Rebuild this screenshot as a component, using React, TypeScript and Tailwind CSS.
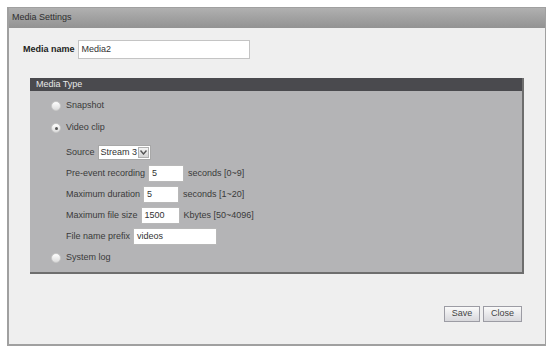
import React from 'react';

const font = { fontFamily: '"Liberation Sans", Arial, sans-serif' };

function Radio({ checked, label }: { checked?: boolean; label: string }) {
  return (
    <div className="flex h-[22px] items-center pl-[21px]">
      <span className="flex h-[10px] w-[10px] items-center justify-center rounded-full border border-[#c8c8c8] bg-gradient-to-b from-[#ffffff] to-[#dcdcdc]">
        {checked && <span className="h-[3px] w-[3px] rounded-full bg-[#555]" />}
      </span>
      <span className="ml-[5px] text-[9px] text-[#3a3a3a]">{label}</span>
    </div>
  );
}

function Field({ label, width, value, hint }: { label: string; width: string; value: string; hint?: string }) {
  return (
    <div className="flex h-[21px] items-center">
      <span className="text-[9px] text-[#3a3a3a]">{label}</span>
      <div className={`ml-[3px] flex h-[17px] items-center border border-[#b8b8b8] bg-white pl-[3px] text-[9px] text-[#333] ${width}`}>
        {value}
      </div>
      {hint && <span className="ml-[4px] text-[9px] text-[#3a3a3a]">{hint}</span>}
    </div>
  );
}

function Btn({ children, w }: { children: React.ReactNode; w: string }) {
  return (
    <button className={`flex h-[16px] items-center justify-center border border-[#9c9ca4] bg-gradient-to-b from-[#fafafa] to-[#d8d8dc] text-[9px] text-[#444] ${w}`}>
      {children}
    </button>
  );
}

export default function App() {
  return (
    <div className="h-[348px] w-[549px] bg-white pl-[7px] pt-[7px]" style={font}>
      <div className="flex h-[339px] w-[539px] flex-col border border-[#a0a0a0] border-b-2 border-l-2 bg-[#efefef]">
        <div className="flex h-[20px] items-center bg-gradient-to-b from-[#b0b0b0] to-[#929292] pl-[3px] text-[9px] text-[#2e2e2e]">
          Media Settings
        </div>

        <div className="mt-[12px] flex items-center pl-[14px]">
          <span className="text-[9px] font-bold text-[#222]">Media name</span>
          <div className="ml-[3px] flex h-[19px] w-[172px] items-center border border-[#c4c4c4] bg-white pl-[3px] text-[9px] text-[#333]">
            Media2
          </div>
        </div>

        <div className="ml-[21px] mt-[19px] w-[494px] border-b-2 border-r-2 border-[#6e6e6e] bg-[#b4b4b6]">
          <div className="flex h-[13px] items-center bg-[#4a4a4e] pl-[6px] text-[9px] text-[#e8e8e8]">Media Type</div>
          <div className="pb-[3px] pt-[4px]">
            <Radio label="Snapshot" />
            <Radio checked label="Video clip" />
            <div className="pl-[36px] pt-[3px]">
              <div className="flex h-[21px] items-center">
                <span className="text-[9px] text-[#3a3a3a]">Source</span>
                <div className="ml-[3px] flex h-[15px] w-[53px] items-center border border-[#a8a8a8] bg-white pl-[2px] text-[9px] text-[#333]">
                  <span className="flex-1">Stream 3</span>
                  <span className="mr-[1px] flex h-[11px] w-[11px] items-center justify-center border border-[#b0b0b0] bg-gradient-to-b from-[#f4f4f4] to-[#d4d4d4]">
                    <svg width="7" height="5" viewBox="0 0 7 5"><path d="M0.5 0.5 L3.5 4 L6.5 0.5" fill="none" stroke="#555" strokeWidth="1.4" /></svg>
                  </span>
                </div>
              </div>
              <Field label="Pre-event recording" width="w-[36px]" value="5" hint="seconds [0~9]" />
              <Field label="Maximum duration" width="w-[36px]" value="5" hint="seconds [1~20]" />
              <Field label="Maximum file size" width="w-[39px]" value="1500" hint="Kbytes [50~4096]" />
              <Field label="File name prefix" width="w-[84px]" value="videos" />
            </div>
            <Radio label="System log" />
          </div>
        </div>

        <div className="flex-1" />
        <div className="mb-[22px] flex justify-end gap-[3px] pr-[23px]">
          <Btn w="w-[36px]">Save</Btn>
          <Btn w="w-[39px]">Close</Btn>
        </div>
      </div>
    </div>
  );
}
